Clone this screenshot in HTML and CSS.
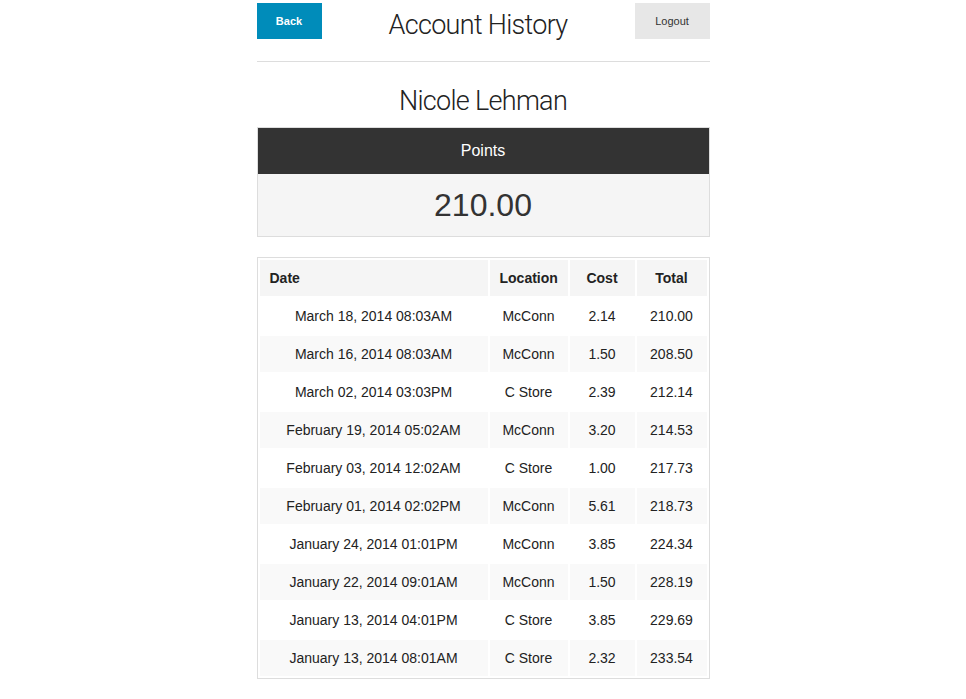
FILE: index.html
```html
<!DOCTYPE html>
<html lang="en">
<head>
<meta charset="utf-8">
<title>Account History</title>
<link rel="stylesheet" href="styles.css">
</head>
<body>
<div class="page">
  <header class="topbar">
    <a class="btn btn-back" href="#">Back</a>
    <h1 class="title">Account History</h1>
    <a class="btn btn-logout" href="#">Logout</a>
  </header>
  <hr class="rule">
  <h2 class="name">Nicole Lehman</h2>
  <div class="points">
    <div class="points-head">Points</div>
    <div class="points-value">210.00</div>
  </div>
  <table class="history">
    <colgroup>
      <col class="c-date"><col class="c-loc"><col class="c-cost"><col class="c-total">
    </colgroup>
    <thead>
      <tr><th class="th-date">Date</th><th>Location</th><th>Cost</th><th>Total</th></tr>
    </thead>
    <tbody>
      <tr><td>March 18, 2014 08:03AM</td><td>McConn</td><td>2.14</td><td>210.00</td></tr>
      <tr><td>March 16, 2014 08:03AM</td><td>McConn</td><td>1.50</td><td>208.50</td></tr>
      <tr><td>March 02, 2014 03:03PM</td><td>C Store</td><td>2.39</td><td>212.14</td></tr>
      <tr><td>February 19, 2014 05:02AM</td><td>McConn</td><td>3.20</td><td>214.53</td></tr>
      <tr><td>February 03, 2014 12:02AM</td><td>C Store</td><td>1.00</td><td>217.73</td></tr>
      <tr><td>February 01, 2014 02:02PM</td><td>McConn</td><td>5.61</td><td>218.73</td></tr>
      <tr><td>January 24, 2014 01:01PM</td><td>McConn</td><td>3.85</td><td>224.34</td></tr>
      <tr><td>January 22, 2014 09:01AM</td><td>McConn</td><td>1.50</td><td>228.19</td></tr>
      <tr><td>January 13, 2014 04:01PM</td><td>C Store</td><td>3.85</td><td>229.69</td></tr>
      <tr><td>January 13, 2014 08:01AM</td><td>C Store</td><td>2.32</td><td>233.54</td></tr>
    </tbody>
  </table>
</div>
</body>
</html>
```
FILE: styles.css
```css
* { box-sizing: border-box; }
html, body { margin: 0; padding: 0; background: #fff; }
body {
  font-family: "Liberation Sans", Arial, sans-serif;
  color: #222;
  font-size: 14px;
}
.page {
  width: 453px;
  margin: 0 auto;
  padding-top: 3px;
}
.topbar {
  display: flex;
  justify-content: space-between;
  align-items: flex-start;
  height: 36px;
}
.btn {
  display: flex;
  align-items: center;
  justify-content: center;
  height: 36px;
  font-size: 11px;
  text-decoration: none;
}
.btn-back {
  width: 65px;
  background: #008cba;
  color: #fff;
  font-weight: bold;
}
.btn-logout {
  width: 75px;
  background: #e7e7e7;
  color: #333;
}
.title {
  margin: 0;
  padding-top: 4px;
  font-family: Roboto, "Liberation Sans", sans-serif;
  font-weight: 300;
  font-size: 27px;
  letter-spacing: -0.7px;
  line-height: 36px;
  color: #222;
}
.rule {
  margin: 22px 0 0;
  border: 0;
  border-top: 1px solid #ddd;
  height: 0;
}
.name {
  margin: 0;
  padding-top: 21px;
  text-align: center;
  font-family: Roboto, "Liberation Sans", sans-serif;
  font-weight: 300;
  font-size: 27px;
  letter-spacing: -0.7px;
  line-height: 36px;
  color: #222;
  height: 65px;
}
.points {
  border: 1px solid #ddd;
  text-align: center;
}
.points-head {
  background: #333;
  color: #fff;
  font-size: 16px;
  line-height: 46px;
}
.points-value {
  background: #f5f5f5;
  color: #333;
  font-size: 32px;
  line-height: 62px;
}
.history {
  margin-top: 20px;
  width: 453px;
  border: 1px solid #ddd;
  border-collapse: separate;
  border-spacing: 2px;
  table-layout: fixed;
}
.c-date { width: 228px; }
.c-loc { width: 78px; }
.c-cost { width: 65px; }
.c-total { width: 70px; }
.history th, .history td {
  height: 36px;
  padding: 0 10px;
  line-height: 18px;
  text-align: center;
  color: #222;
  white-space: nowrap;
}
.history th {
  background: #f5f5f5;
  font-weight: bold;
}
.history th.th-date { text-align: left; }
.history tbody tr:nth-child(even) td { background: #f9f9f9; }
```
